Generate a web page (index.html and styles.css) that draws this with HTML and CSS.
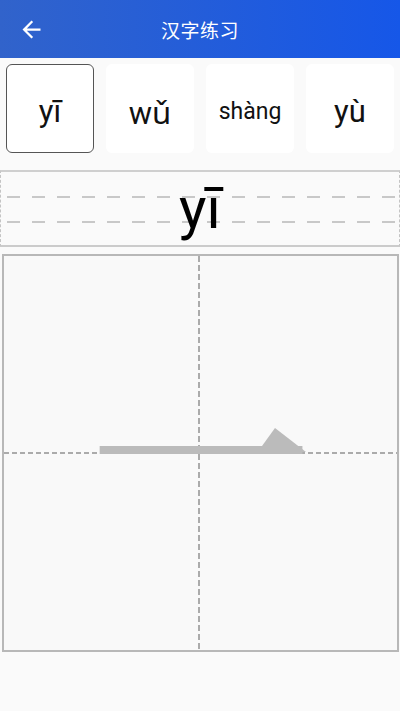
FILE: index.html
```html
<!DOCTYPE html>
<html lang="zh">
<head>
<meta charset="utf-8">
<meta name="viewport" content="width=device-width, initial-scale=1">
<title>汉字练习</title>
<link rel="stylesheet" href="styles.css">
</head>
<body>
<header class="appbar">
  <button class="back" aria-label="返回">
    <svg viewBox="0 0 24 24" width="27" height="27"><path d="M20 11H7.83l5.59-5.59L12 4l-8 8 8 8 1.41-1.41L7.83 13H20v-2z" fill="#fff"/></svg>
  </button>
  <h1 class="title">汉字练习</h1>
  <span class="spacer"></span>
</header>

<section class="cards">
  <div class="card active">yī</div>
  <div class="card">wǔ</div>
  <div class="card small">shàng</div>
  <div class="card">yù</div>
</section>

<section class="pinyin-box">
  <div class="lines">
    <div class="band"></div>
    <div class="dash"></div>
    <div class="band"></div>
    <div class="dash"></div>
    <div class="band"></div>
  </div>
  <div class="pinyin">yī</div>
</section>

<section class="grid-box">
  <div class="hanzi">一</div>
  <span class="stroke-end"></span>
  <div class="vline"></div>
  <div class="hline"></div>
</section>
</body>
</html>
```

FILE: styles.css
```css
* { box-sizing: border-box; }
html, body { margin: 0; padding: 0; }
body {
  background: #fafafa;
  font-family: Roboto, "Noto Sans", sans-serif;
  color: #111;
  width: 400px;
}

.appbar {
  height: 58px;
  background: linear-gradient(to right, #3163cb, #1657e8);
  display: grid;
  grid-template-columns: 60px 1fr 60px;
  align-items: center;
}
.back {
  background: none;
  border: 0;
  padding: 0 0 0 18px;
  margin: 0;
  height: 58px;
  display: flex;
  align-items: center;
  cursor: pointer;
}
.back svg { display: block; }
.title {
  margin: 0;
  text-align: center;
  color: #fff;
  font-family: "Noto Sans CJK SC", sans-serif;
  font-weight: 400;
  font-size: 19px;
  letter-spacing: 0.5px;
}

.cards {
  display: grid;
  grid-template-columns: repeat(4, 88px);
  gap: 12px;
  padding: 6px 6px 0;
}
.card {
  height: 89px;
  background: #fff;
  border-radius: 6px;
  display: flex;
  align-items: center;
  justify-content: center;
  padding-top: 6px;
  font-size: 31px;
  color: #111;
}
.card.small { font-size: 23px; }
.card.active { border: 1px solid #555; }

.pinyin-box {
  margin-top: 17px;
  height: 77px;
  border-top: 2px solid #cfcfcf;
  border-bottom: 2px solid #cbcbcb;
  border-left: 1px dashed #c4c4c4;
  border-right: 1px dashed #c4c4c4;
  display: grid;
}
.lines, .pinyin { grid-area: 1 / 1; }
.lines {
  display: flex;
  flex-direction: column;
}
.band { flex: 1; }
.dash {
  height: 2px;
  background: repeating-linear-gradient(to right, #c8c8c8 0 13px, transparent 13px 25px);
  background-position: 6px 0;
}
.lines .band:first-child { flex: 0 0 24px; }
.lines .band:nth-child(3) { flex: 0 0 23px; }
.pinyin {
  text-align: center;
  font-size: 58px;
  line-height: 73px;
  color: #000;
}

.grid-box {
  position: relative;
  margin: 7px 1px 0 2px;
  height: 398px;
  border: 2px solid #b8b8b8;
  background: #f9f9f9;
  display: grid;
}
.vline, .hline, .hanzi { grid-area: 1 / 1; }
.vline {
  width: 2px;
  justify-self: center;
  margin-right: 3px;
  background: repeating-linear-gradient(to bottom, #ababab 0 6px, transparent 6px 9px);
}
.hline {
  height: 2px;
  align-self: center;
  background: repeating-linear-gradient(to right, #ababab 0 5px, transparent 5px 8px);
}
.hanzi {
  justify-self: center;
  align-self: center;
  margin-bottom: 22px;
  font-family: "Noto Sans CJK SC", sans-serif;
  font-weight: 300;
  font-size: 223px;
  line-height: 1;
  color: #bbb;
  transform: scaleY(0.68);
}
.stroke-end {
  position: absolute;
  left: 258px;
  top: 172px;
  width: 44px;
  height: 24px;
  background: #bbb;
  clip-path: polygon(0 18px, 13px 0, 44px 24px, 0 24px);
}
```
